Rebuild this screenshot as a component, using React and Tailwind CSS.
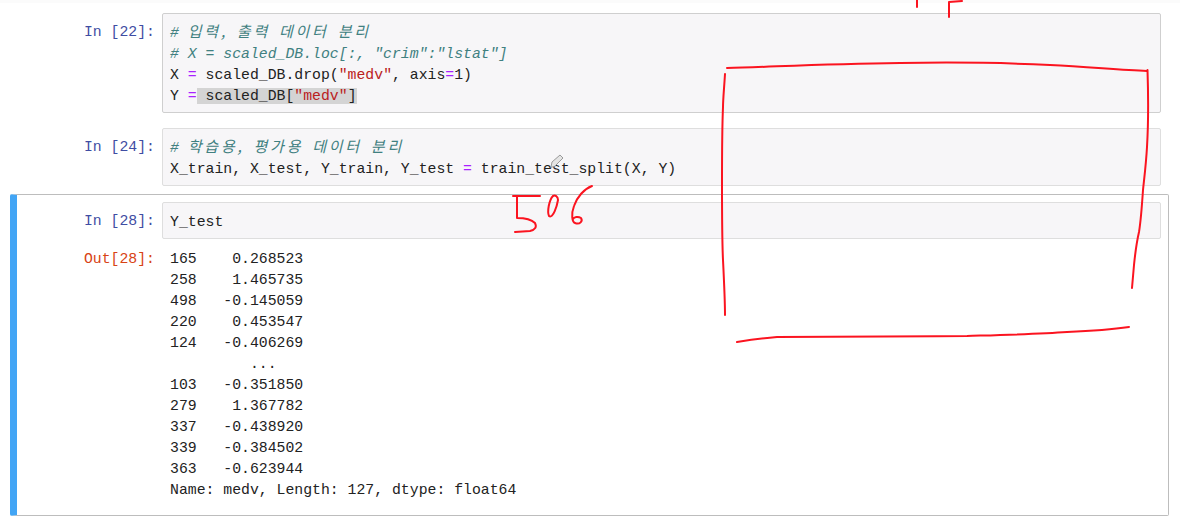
const mono = "font-['Liberation_Mono','Noto_Sans_CJK_KR',monospace] text-[14.8px] leading-[21px] whitespace-pre";

function Ko({ children }) {
  return <span className="font-['Noto_Sans_CJK_KR',sans-serif] text-[15px] leading-none tracking-[2.8px]">{children}</span>;
}
const C = ({ children }) => <span className="italic text-[#408080]">{children}</span>;
const Op = ({ children }) => <span className="text-[#aa22ff]">{children}</span>;
const S = ({ children }) => <span className="text-[#ba2121]">{children}</span>;

function Prompt({ children, out }) {
  return (
    <div className={`${mono} w-[138px] shrink-0 text-right ${out ? "text-[#d84315]" : "text-[#3f4da3]"}`}>
      {children}
    </div>
  );
}

function Input({ children, dark }) {
  return (
    <div className={`${mono} flex-1 rounded-[2px] border bg-[#f7f6f8] px-[7px] pt-[9px] pb-[5px] text-[#222222] ${dark ? "border-[#cfcfcf]" : "border-[#dedede]"}`}>
      {children}
    </div>
  );
}

function Row({ label, children, dark }) {
  return (
    <div className="flex gap-[7px]">
      <Prompt><div className="pt-[9px]">{label}</div></Prompt>
      <Input dark={dark}>{children}</Input>
    </div>
  );
}

const output = `165    0.268523
258    1.465735
498   -0.145059
220    0.453547
124   -0.406269
         ...
103   -0.351850
279    1.367782
337   -0.438920
339   -0.384502
363   -0.623944
Name: medv, Length: 127, dtype: float64`;

function Strokes() {
  const paths = [
    "M727 68 C770 67 820 64 900 63 C960 62 1010 63 1050 65 C1090 67 1120 70 1147 71",
    "M1147.5 70 C1148.5 100 1148 130 1147 147 C1146 165 1144 180 1143 190 C1142 205 1141 220 1139 232 C1136 245 1135 255 1134 265 L1132 288",
    "M725 74 C724 90 723 100 723 107 C722 130 722 160 722 183 C722 210 722 240 723 260 C724 280 725 300 725 315",
    "M737 342 C750 340 765 338 777 337 C830 336.5 900 336.5 967 336 C1000 335 1040 334 1067 332 C1090 331 1115 329 1129 327",
    "M917 0 L917 7",
    "M949 17 L949 2 L962 1",
    "M513 196 L540 196",
    "M517 197 L517 218 Q530 218 535 223 Q538 229 530 231 L515 232",
    "M553 196 C549 200 547 212 549 216 C553 219 557 206 558 200 C558 196 555 195 553 196",
    "M592 186 C584 189 577 197 574 206 C571 214 572 222 575 223 C580 225 583 221 581 218 C578 216 574 217 573 219",
  ];
  return (
    <svg className="absolute left-0 top-0" width="1180" height="526" fill="none" stroke="#fb1420" strokeWidth="2" strokeLinecap="round" strokeLinejoin="round">
      {paths.map((d) => <path key={d} d={d} />)}
      <path d="M551 167 L552 162 L560 155 L563 158 L555 166 Z" stroke="#9a9a9a" strokeWidth="1" fill="#e4e4e4" />
    </svg>
  );
}

export default function App() {
  return (
    <div className="relative h-[526px] w-[1180px] overflow-hidden bg-white">
      <div className="h-[3px] bg-[#fbfbfb]" />
      <div className="flex flex-col pl-[10px] pr-[11px] pt-[10px]">
        <div className="pr-[8px] pl-[7px]">
          <Row label="In [22]:" dark>
            <div><C>{"# "}<Ko>입력,</Ko>{" "}<Ko>출력</Ko>{" "}<Ko>데이터</Ko>{" "}<Ko>분리</Ko></C></div>
            <div><C>{'# X = scaled_DB.loc[:, "crim":"lstat"]'}</C></div>
            <div>X <Op>=</Op> scaled_DB.drop(<S>"medv"</S>, axis<Op>=</Op><span>1</span>)</div>
            <div>Y <Op>=</Op><span className="bg-[#d4d4d4]"> scaled_DB[<S>"medv"</S>]</span></div>
          </Row>
        </div>
        <div className="mt-[15px] pr-[8px] pl-[7px]">
          <Row label="In [24]:">
            <div><C>{"# "}<Ko>학습용,</Ko>{" "}<Ko>평가용</Ko>{" "}<Ko>데이터</Ko>{" "}<Ko>분리</Ko></C></div>
            <div>X_train, X_test, Y_train, Y_test <Op>=</Op> train_test_split(X, Y)</div>
          </Row>
        </div>
        <div className="mt-[8px] rounded-[2px] border border-[#bdbdbd] border-l-[7px] border-l-[#42a5f5] pt-[7px] pb-[14px] pr-[7px]">
          <Row label="In [28]:">Y_test</Row>
          <div className="mt-[10px] flex gap-[7px]">
            <Prompt out>Out[28]:</Prompt>
            <div className={`${mono} leading-[21.1px] px-[8px] text-[#222222]`}>{output}</div>
          </div>
        </div>
      </div>
      <Strokes />
    </div>
  );
}
